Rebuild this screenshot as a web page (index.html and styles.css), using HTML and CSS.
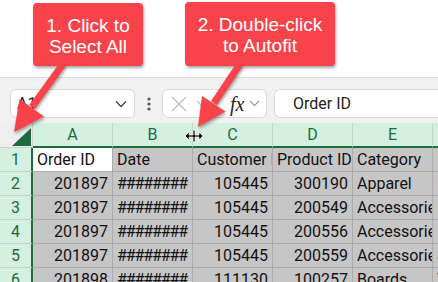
FILE: index.html
```html
<!DOCTYPE html>
<html lang="en">

<head>
    <meta charset="UTF-8">
    <meta name="viewport" content="width=device-width, initial-scale=1.0">
    <title>Select All and Autofit</title>
    <link rel="stylesheet" href="styles.css">
</head>

<body>
    <div class="page">
        <!-- Callouts -->
        <div class="callouts">
            <div class="callout callout-one">1. Click to<br>Select All</div>
            <div class="callout callout-two">2. Double-click<br>to Autofit</div>
        </div>

        <!-- Formula bar -->
        <div class="toolbar">
            <div class="name-box">
                <span>A1</span>
                <svg class="chevron" width="12" height="8" viewBox="0 0 12 8"><path d="M1 1.5 L6 6.5 L11 1.5" fill="none" stroke="#444" stroke-width="1.3"/></svg>
            </div>
            <div class="dots">
                <svg width="4" height="14" viewBox="0 0 4 14"><circle cx="2" cy="2" r="1.6" fill="#555"/><circle cx="2" cy="7" r="1.6" fill="#555"/><circle cx="2" cy="12" r="1.6" fill="#555"/></svg>
            </div>
            <div class="fx-box">
                <svg class="cancel" width="16" height="16" viewBox="0 0 16 16"><path d="M1 1 L15 15 M15 1 L1 15" stroke="#bdbdbd" stroke-width="1.3"/></svg>
                <svg class="chevron light" width="10" height="7" viewBox="0 0 10 7"><path d="M1 1 L5 5 L9 1" fill="none" stroke="#bdbdbd" stroke-width="1.2"/></svg>
                <span class="fx">fx</span>
                <svg class="chevron light" width="11" height="7" viewBox="0 0 11 7"><path d="M1 1 L5.5 5.5 L10 1" fill="none" stroke="#9a9a9a" stroke-width="1.2"/></svg>
            </div>
            <div class="formula">Order ID</div>
        </div>

        <!-- Worksheet -->
        <div class="sheet">
            <div class="corner">
                <svg width="19" height="18" viewBox="0 0 19 18"><polygon points="19,0 19,18 0,18" fill="#1e6b41"/></svg>
            </div>
            <div class="col-head">A</div>
            <div class="col-head">B</div>
            <div class="col-head">C</div>
            <div class="col-head">D</div>
            <div class="col-head">E</div>
            <div class="col-head">F</div>

            <div class="row-head">1</div>
            <div class="cell active">Order ID</div>
            <div class="cell">Date</div>
            <div class="cell">Customer ID</div>
            <div class="cell">Product ID</div>
            <div class="cell">Category</div>
            <div class="cell">Item</div>

            <div class="row-head">2</div>
            <div class="cell num">201897</div>
            <div class="cell hash">########</div>
            <div class="cell num">105445</div>
            <div class="cell num">300190</div>
            <div class="cell">Apparel</div>
            <div class="cell">Hoodie</div>

            <div class="row-head">3</div>
            <div class="cell num">201897</div>
            <div class="cell hash">########</div>
            <div class="cell num">105445</div>
            <div class="cell num">200549</div>
            <div class="cell">Accessories</div>
            <div class="cell">Helmet</div>

            <div class="row-head">4</div>
            <div class="cell num">201897</div>
            <div class="cell hash">########</div>
            <div class="cell num">105445</div>
            <div class="cell num">200556</div>
            <div class="cell">Accessories</div>
            <div class="cell">Leash</div>

            <div class="row-head">5</div>
            <div class="cell num">201897</div>
            <div class="cell hash">########</div>
            <div class="cell num">105445</div>
            <div class="cell num">200559</div>
            <div class="cell">Accessories</div>
            <div class="cell">Strap</div>

            <div class="row-head">6</div>
            <div class="cell num">201898</div>
            <div class="cell hash">########</div>
            <div class="cell num">111130</div>
            <div class="cell num">100257</div>
            <div class="cell">Boards</div>
            <div class="cell">Twin</div>
        </div>

        <!-- Arrows and resize cursor drawn over the sheet -->
        <svg class="overlay" width="438" height="282" viewBox="0 0 438 282">
            <g class="arrow">
                <line x1="63" y1="64" x2="32" y2="107" stroke="#f8434b" stroke-width="7"/>
                <polygon points="14,132 44,116.5 19.5,99" fill="#f8434b"/>
            </g>
            <g class="arrow">
                <line x1="240" y1="64" x2="214" y2="103" stroke="#f8434b" stroke-width="7"/>
                <polygon points="198,127 225.5,111.5 202,96" fill="#f8434b"/>
            </g>
            <g class="resize-cursor">
                <path d="M193 130 H195 V135 H199 V132 L203 136 L199 140 V137 H195 V142 H193 V137 H189 V140 L185 136 L189 132 V135 H193 Z" fill="#000" stroke="#fff" stroke-width="0.8"/>
            </g>
        </svg>
    </div>
</body>

</html>
```

FILE: styles.css
```css
body {
    margin: 0;
    padding: 0;
    background-color: white;
    font-family: Roboto, "Liberation Sans", sans-serif;
}

.page {
    position: relative;
    width: 438px;
    height: 282px;
    overflow: hidden;
}

/* Callouts */
.callouts {
    display: flex;
    align-items: flex-start;
    height: 77px;
    padding-left: 33px;
}

.callout {
    background-color: #f8434b;
    color: white;
    font-family: "Liberation Sans", Arial, sans-serif;
    font-size: 19px;
    line-height: 21px;
    text-align: center;
    border-radius: 4px;
    box-shadow: 1px 2px 3px rgba(0, 0, 0, 0.35);
    display: flex;
    align-items: center;
    justify-content: center;
    padding-top: 2px;
    box-sizing: border-box;
}

.callout-one {
    width: 110px;
    height: 63px;
    margin-top: 3px;
}

.callout-two {
    width: 150px;
    height: 64px;
    margin-top: 2px;
    margin-left: 42px;
}

/* Formula bar */
.toolbar {
    display: flex;
    align-items: flex-start;
    height: 46px;
    padding-top: 11px;
    box-sizing: border-box;
    background-color: #f1f1f1;
    border-top: 1px solid #dedede;
}

.name-box,
.fx-box,
.formula {
    height: 29px;
    box-sizing: border-box;
    background-color: white;
    border: 1px solid #d9d9d9;
    border-radius: 6px;
    display: flex;
    align-items: center;
}

.name-box {
    width: 125px;
    margin-left: 10px;
    padding: 0 7px 0 6px;
    justify-content: space-between;
    font-size: 16px;
    color: #222;
}

.dots {
    width: 27px;
    height: 29px;
    display: flex;
    align-items: center;
    justify-content: center;
}

.fx-box {
    width: 105px;
    padding-left: 8px;
}

.fx-box .cancel {
    margin-right: 9px;
}

.fx {
    font-family: "Liberation Serif", "DejaVu Serif", serif;
    font-style: italic;
    font-size: 20px;
    color: #222;
    margin-left: 24px;
    margin-right: 5px;
    line-height: 20px;
}

.formula {
    flex: 1;
    margin-left: 7px;
    border-right: none;
    border-radius: 6px 0 0 6px;
    padding-left: 18px;
    font-size: 16px;
    color: #222;
}

/* Worksheet grid */
.sheet {
    display: grid;
    grid-template-columns: 33px repeat(6, 80px);
    grid-template-rows: 25px;
    grid-auto-rows: 24px;
    font-size: 16px;
    background-color: #f1f1f1;
}

.corner {
    background-color: #eeeeee;
    border-right: 1px solid #d0d0d0;
    border-bottom: 1px solid #d0d0d0;
    display: flex;
    align-items: flex-end;
    justify-content: flex-end;
    padding: 0 1px 1px 0;
}

.corner svg {
    display: block;
}

.col-head {
    background-color: #d3f0e0;
    color: #1e6b41;
    text-align: center;
    line-height: 23px;
    border-right: 1px solid #bcd9c6;
    border-bottom: 2px solid #1e6b41;
}

.row-head {
    background-color: #d3f0e0;
    color: #1e6b41;
    text-align: center;
    line-height: 23px;
    border-right: 2px solid #1e6b41;
    border-bottom: 1px solid #bcd9c6;
}

.cell {
    background-color: #c6c6c6;
    color: #111;
    line-height: 24px;
    padding: 0 4px;
    white-space: nowrap;
    overflow: hidden;
    border-right: 1px solid #acacac;
    border-bottom: 1px solid #acacac;
}

.cell.active {
    background-color: white;
}

.num {
    text-align: right;
}

.hash {
    letter-spacing: -1.1px;
}

.overlay {
    position: absolute;
    left: 0;
    top: 0;
    pointer-events: none;
}

.arrow {
    filter: drop-shadow(1px 2px 1.5px rgba(0, 0, 0, 0.35));
}
```
